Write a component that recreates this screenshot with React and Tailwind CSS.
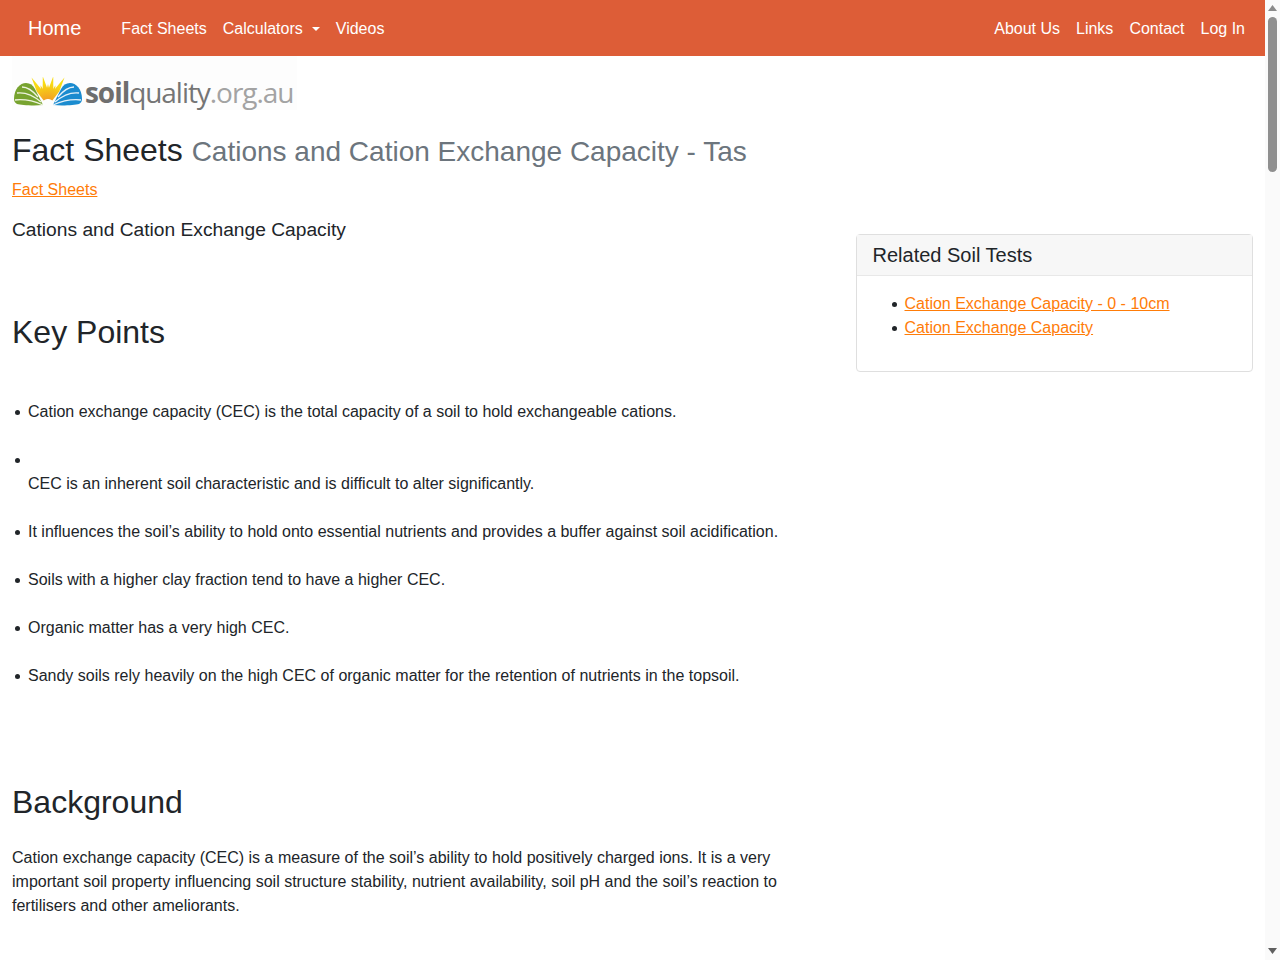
import React from 'react'

const keyPoints = [
  'Cation exchange capacity (CEC) is the total capacity of a soil to hold exchangeable cations.',
  'CEC is an inherent soil characteristic and is difficult to alter significantly.',
  'It influences the soil’s ability to hold onto essential nutrients and provides a buffer against soil acidification.',
  'Soils with a higher clay fraction tend to have a higher CEC.',
  'Organic matter has a very high CEC.',
  'Sandy soils rely heavily on the high CEC of organic matter for the retention of nutrients in the topsoil.',
]

// sun rays of the logo, fanned out from the middle of the mark
const rays = [
  { angle: -30, length: 33 },
  { angle: -20, length: 22 },
  { angle: -10, length: 30 },
  { angle: 0, length: 22 },
  { angle: 10, length: 30 },
  { angle: 20, length: 22 },
  { angle: 30, length: 33 },
]

function LogoMark() {
  return (
    <svg width="70" height="30" viewBox="0 0 70 30" className="shrink-0">
      <defs>
        <linearGradient id="sun" gradientUnits="userSpaceOnUse" x1="0" y1="0" x2="0" y2="24">
          <stop offset="0.25" stopColor="#f8dc12" />
          <stop offset="1" stopColor="#f29a26" />
        </linearGradient>
      </defs>
      {rays.map((ray) => (
        <path
          key={ray.angle}
          d={`M35 ${29 - ray.length}L37.500 ${29 - ray.length * 0.55} 36 22H34L32.500 ${29 - ray.length * 0.55}z`}
          fill="url(#sun)"
          transform={`rotate(${ray.angle} 35 29)`}
        />
      ))}
      <path d="M1 22C1 12 7 6 13 6c4 0 7 2 9 6l8 16C20 29 8 28 4 27c-2-1-3-3-3-5z" fill="#77a32f" />
      <path d="M30 28C21 24 11 22 2 23M28 25C21 19 12 15 4 16M25 20C20 14 15 10 9 10" stroke="#eef3df" strokeWidth="1.3" fill="none" />
      <path d="M69 22C69 12 63 6 57 6c-4 0-7 2-9 6l-8 16c10 1 22 0 26-1 2-1 3-3 3-5z" fill="#1a8bcf" />
      <path d="M40 28C49 24 59 22 68 23M42 25C49 19 58 15 66 16M45 20C50 14 55 10 61 10" stroke="#e3f1fa" strokeWidth="1.3" fill="none" />
    </svg>
  )
}

function Scrollbar() {
  return (
    <div className="flex h-[960px] w-[15px] shrink-0 flex-col items-center bg-[#fafafa]">
      <svg width="15" height="17" viewBox="0 0 15 17" className="shrink-0">
        <path d="M3 11 7.500 5 12 11z" fill="#8a8a8a" />
      </svg>
      <div className="h-[155px] w-[9px] shrink-0 rounded-[5px] bg-[#8f8f8f]" />
      <div className="flex-1" />
      <svg width="15" height="17" viewBox="0 0 15 17" className="shrink-0">
        <path d="M3 5h9l-4.500 6z" fill="#5f5f5f" />
      </svg>
    </div>
  )
}

function Bullet() {
  return <span className="-ml-[13px] mr-2 inline-block h-[5px] w-[5px] rounded-full bg-[#212529] align-middle" />
}

export default function App() {
  return (
    <div className="flex h-[960px] overflow-hidden bg-white font-['Liberation_Sans',Arial,sans-serif] text-base leading-6 text-[#212529]">
      <div className="min-w-0 flex-1 overflow-hidden">
        <nav className="flex h-14 items-center bg-[#dd5d37] pl-7 pr-5 text-white">
          <a className="mr-10 text-xl leading-[30px]">Home</a>
          <div className="flex items-center gap-4 pt-0.5">
            <a>Fact Sheets</a>
            <a className="flex items-center">
              Calculators
              <span className="ml-[9px] h-0 w-0 border-x-[4.8px] border-t-[4.8px] border-x-transparent border-t-white" />
            </a>
            <a>Videos</a>
          </div>
          <div className="ml-auto flex gap-4 pt-0.5">
            <a>About Us</a>
            <a>Links</a>
            <a>Contact</a>
            <a>Log In</a>
          </div>
        </nav>

        <div className="px-3">
          <div className="flex h-[54px] w-[285px] items-center gap-[2px] bg-[#fdfdfd] pl-px pt-[18px]">
            <LogoMark />
            <span className="font-['Open_Sans',sans-serif] text-[28px] leading-none tracking-[-1.05px] text-[#a3a3a3]">
              <span className="font-bold text-[#6e6e6e]">soil</span>
              <span className="text-[#757575]">quality</span>
              .org.au
            </span>
          </div>

          <h1 className="mt-[21px] text-[32px] leading-[38px]">
            Fact Sheets <small className="text-[28px] text-[#6c757d]">Cations and Cation Exchange Capacity - Tas</small>
          </h1>
          <p className="mt-[7px]">
            <a className="text-[#ff7c08] underline">Fact Sheets</a>
          </p>

          <div className="flex">
            <div className="w-[843.5px] shrink-0">
              <p className="mt-4 text-[19.2px] leading-6">Cations and Cation Exchange Capacity</p>
              <h2 className="mt-[71px] text-[32px] leading-[38px]">Key Points</h2>
              <ul className="mt-[49px] w-[780px] pl-4">
                {keyPoints.map((point, index) => (
                  <li key={index} className="mb-6">
                    <Bullet />
                    {index === 1 && <br />}
                    {point}
                  </li>
                ))}
              </ul>
              <h2 className="mt-[95px] text-[32px] leading-[38px]">Background</h2>
              <p className="mt-[25px] w-[780px]">
                Cation exchange capacity (CEC) is a measure of the soil’s ability to hold positively charged ions. It is a very important soil property influencing soil structure stability, nutrient availability, soil pH and the soil’s reaction to fertilisers and other ameliorants.
              </p>
            </div>

            <div className="mt-8 h-[138px] w-[397.5px] shrink-0 rounded border border-[#dfdfdf]">
              <div className="border-b border-[#e8e8e8] bg-[#f7f7f7] px-4 py-2 text-xl leading-6">Related Soil Tests</div>
              <ul className="pl-12 pt-4">
                <li><Bullet /><a className="text-[#ff7c08] underline">Cation Exchange Capacity - 0 - 10cm</a></li>
                <li><Bullet /><a className="text-[#ff7c08] underline">Cation Exchange Capacity</a></li>
              </ul>
            </div>
          </div>
        </div>
      </div>
      <Scrollbar />
    </div>
  )
}
